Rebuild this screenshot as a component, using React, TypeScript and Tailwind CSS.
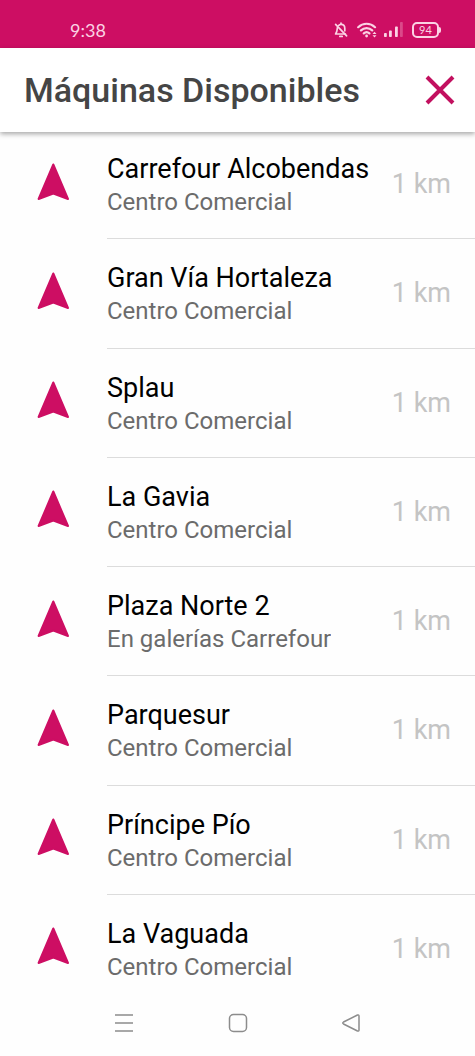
type Machine = {
  name: string;
  place: string;
  distance: string;
};

const machines: Machine[] = [
  { name: "Carrefour Alcobendas", place: "Centro Comercial", distance: "1 km" },
  { name: "Gran Vía Hortaleza", place: "Centro Comercial", distance: "1 km" },
  { name: "Splau", place: "Centro Comercial", distance: "1 km" },
  { name: "La Gavia", place: "Centro Comercial", distance: "1 km" },
  { name: "Plaza Norte 2", place: "En galerías Carrefour", distance: "1 km" },
  { name: "Parquesur", place: "Centro Comercial", distance: "1 km" },
  { name: "Príncipe Pío", place: "Centro Comercial", distance: "1 km" },
  { name: "La Vaguada", place: "Centro Comercial", distance: "1 km" },
];

function MutedBellIcon() {
  return (
    <svg width="14" height="16" viewBox="0 0 14 16" fill="none" stroke="currentColor" strokeWidth="1.7" strokeLinecap="round" strokeLinejoin="round" aria-hidden="true">
      <path d="M4.6 3.6C5.2 2.8 6 2.4 7 2.4c2.3 0 3.8 1.7 3.8 4v2.4M3.4 5.6c-.2 3-.2 4-1.8 6.4h9.8" />
      <path d="M7 1v1.2M5.8 14.4h2.4M1.6 2.4l11 11.4" />
    </svg>
  );
}

function WifiIcon() {
  return (
    <svg width="20" height="16" viewBox="0 0 20 16" fill="none" stroke="currentColor" strokeWidth="2.2" strokeLinecap="round" aria-hidden="true">
      <path d="M1.2 5.2c4.8-4.6 12-4.6 16.8 0M4 8.4c3.2-3 8-3 11.2 0M6.8 11.4c1.6-1.5 4-1.5 5.6 0" />
      <circle cx="9.6" cy="14" r="1.4" fill="currentColor" stroke="none" />
      <path d="M15.5 11.9 17.5 9.7l2 2.2zM15.5 13.3l2 2.2 2-2.2z" fill="currentColor" stroke="none" />
    </svg>
  );
}

function SignalIcon() {
  return (
    <svg width="19" height="16" viewBox="0 0 19 16" fill="currentColor" aria-hidden="true">
      <rect x="0" y="11" width="2.8" height="4" rx="0.8" />
      <rect x="5" y="8.5" width="2.8" height="6.5" rx="0.8" />
      <rect x="11" y="4.5" width="2.8" height="10.5" rx="0.8" />
      <rect x="16" y="0" width="2.8" height="15" rx="0.8" opacity="0.3" />
    </svg>
  );
}

function Battery({ level }: { level: number }) {
  return (
    <div className="flex items-center">
      <span className="flex h-4 w-[27px] items-center justify-center rounded-[5px] border-2 border-[#fbd3e4] font-['Lato',sans-serif] text-[11px] leading-3">
        {level}
      </span>
      <span className="h-[6px] w-[2px] rounded-r-sm bg-[#fbd3e4]" />
    </div>
  );
}

function StatusBar() {
  return (
    <div className="flex h-12 items-center justify-between bg-[#cd0e63] pt-3 pr-[34px] pl-[70px] text-[#fbd3e4]">
      <span className="font-['Lato',sans-serif] text-[18px] leading-6">9:38</span>
      <div className="flex items-center">
        <MutedBellIcon />
        <span className="ml-[9px]">
          <WifiIcon />
        </span>
        <span className="ml-[7px]">
          <SignalIcon />
        </span>
        <span className="ml-[9px]">
          <Battery level={94} />
        </span>
      </div>
    </div>
  );
}

function LocationArrow() {
  return (
    <svg width="34" height="40" viewBox="0 0 34 40" fill="#cd0e63" stroke="#cd0e63" strokeWidth="2" strokeLinejoin="round" aria-hidden="true">
      <path d="M17.3 3.5 32 38 17.3 32.5 2.6 38Z" />
    </svg>
  );
}

function MachineRow({ machine }: { machine: Machine }) {
  return (
    <li className="group flex">
      <div className="flex w-[107px] shrink-0 items-center pb-2 pl-9">
        <LocationArrow />
      </div>
      <div className="flex min-w-0 flex-1 items-center justify-between border-b border-[#dcdcdc] pr-6 group-last:border-transparent">
        <div className="min-w-0">
          <p className="truncate text-[27px] leading-9 text-black">{machine.name}</p>
          <p className="truncate text-[24px] leading-[30px] text-[#6b6b6b]">{machine.place}</p>
        </div>
        <span className="shrink-0 text-[27px] leading-8 text-[#c4c4c4]">{machine.distance}</span>
      </div>
    </li>
  );
}

function NavigationBar() {
  return (
    <nav className="flex h-[52px] shrink-0 items-start justify-between px-[113px] pt-2 text-[#8c8c8c]">
      <button type="button" aria-label="Recientes">
        <svg width="22" height="22" viewBox="0 0 22 22" fill="none" stroke="currentColor" strokeWidth="1.5">
          <path d="M2 3h18M2 11h18M2 19h18" />
        </svg>
      </button>
      <button type="button" aria-label="Inicio">
        <svg width="22" height="22" viewBox="0 0 22 22" fill="none" stroke="currentColor" strokeWidth="1.5">
          <rect x="2.5" y="2.5" width="17" height="17" rx="4" />
        </svg>
      </button>
      <button type="button" aria-label="Atrás">
        <svg width="22" height="22" viewBox="0 0 22 22" fill="none" stroke="currentColor" strokeWidth="1.5" strokeLinejoin="round">
          <path d="M17.5 3 3.5 10q-1.5 1 0 2l14 7q1.5.5 1.5-1V4q0-1.5-1.5-1Z" />
        </svg>
      </button>
    </nav>
  );
}

export default function App() {
  return (
    <div className="flex min-h-screen flex-col bg-[#fefefe] font-['Roboto',sans-serif]">
      <StatusBar />
      <header className="z-10 flex h-21 items-center justify-between bg-white pr-5 pl-6 shadow-[0_2px_5px_rgba(0,0,0,0.35)]">
        <h1 className="text-[34px] leading-10 font-medium text-[#454545]">Máquinas Disponibles</h1>
        <button type="button" aria-label="Cerrar">
          <svg width="30" height="30" viewBox="0 0 30 30" fill="none" stroke="#c2105f" strokeWidth="4">
            <path d="M2 2l26 26M28 2l-26 26" />
          </svg>
        </button>
      </header>
      {/* The first row starts just under the header's shadow */}
      <ul className="-mt-0.5 grid flex-1 auto-rows-fr">
        {machines.map((machine) => (
          <MachineRow key={machine.name} machine={machine} />
        ))}
      </ul>
      <NavigationBar />
    </div>
  );
}
